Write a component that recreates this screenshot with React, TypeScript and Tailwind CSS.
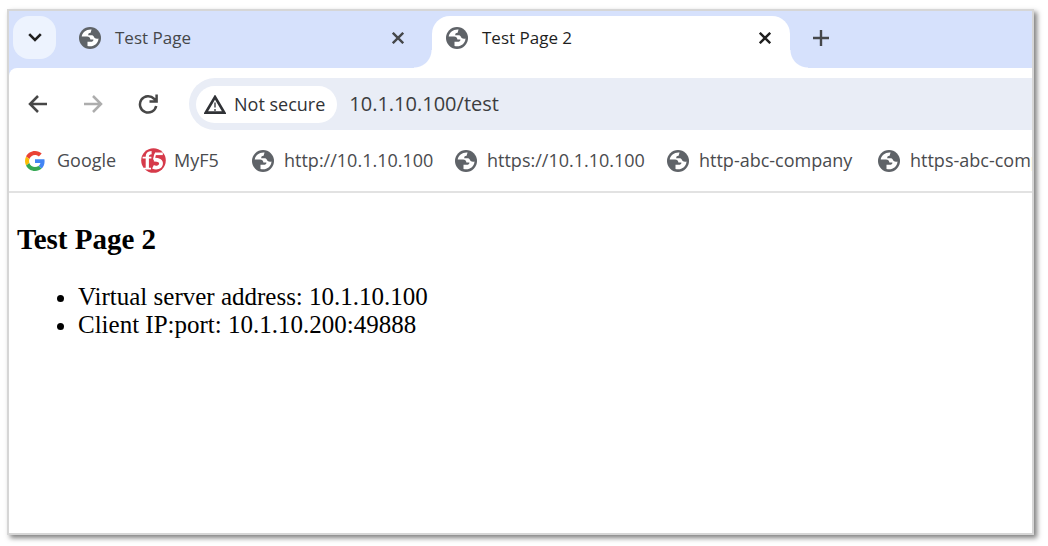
import React, { useState } from "react";

function Globe() {
  return (
    <svg viewBox="0 0 22 22" className="size-[22px] shrink-0" aria-hidden="true">
      <circle cx="11" cy="11" r="11" fill="#5f6368" />
      <path
        fill="#fff"
        d="M12.6 2.5 C7.5 2 3.4 5.2 2.7 9.5 H8 C10 9.5 11.2 10.6 11.4 12.4 H14.4 C14.4 14.2 13.4 14.8 11.6 14.8 H8.5 V19 C14 20.5 19.2 17 19.5 11.5 C17.5 12 15.6 11.6 15 10 C14.6 8.8 13.8 8.2 12.2 8.2 H9.2 C9.2 6.6 10 5.8 11.6 5.8 C12 4.5 12.2 3.5 12.6 2.5 Z"
      />
    </svg>
  );
}

function GoogleLogo() {
  return (
    <svg viewBox="0 0 48 48" className="size-5 shrink-0" aria-hidden="true">
      <path fill="#EA4335" d="M24 9.5c3.54 0 6.71 1.22 9.21 3.6l6.85-6.85C35.9 2.38 30.47 0 24 0 14.62 0 6.51 5.38 2.56 13.22l7.98 6.19C12.43 13.72 17.74 9.5 24 9.5z" />
      <path fill="#4285F4" d="M46.98 24.55c0-1.57-.15-3.09-.38-4.55H24v9.02h12.94c-.58 2.96-2.26 5.48-4.78 7.18l7.73 6c4.51-4.18 7.09-10.36 7.09-17.65z" />
      <path fill="#FBBC05" d="M10.53 28.59c-.48-1.45-.76-2.99-.76-4.59s.27-3.14.76-4.59l-7.98-6.19C.92 16.46 0 20.12 0 24c0 3.88.92 7.54 2.56 10.78l7.97-6.19z" />
      <path fill="#34A853" d="M24 48c6.48 0 11.93-2.13 15.89-5.81l-7.73-6c-2.15 1.45-4.92 2.3-8.16 2.3-6.26 0-11.57-4.22-13.47-9.91l-7.98 6.19C6.51 42.62 14.62 48 24 48z" />
    </svg>
  );
}

function F5Logo() {
  return (
    <svg viewBox="0 0 25 25" className="size-[25px] shrink-0" aria-hidden="true">
      <circle cx="12.5" cy="12.5" r="12.3" fill="#d63a4a" />
      <g fill="none" stroke="#fff">
        <path strokeWidth="3.2" d="M6.3 20.4 V8.5 Q6.3 4.8 10.6 4.6" />
        <path strokeWidth="1.8" d="M1.6 9.6 H10.4 M3 20.6 H10" />
        <path strokeWidth="2.6" d="M14 5.8 H21.8" />
        <path strokeWidth="1.8" d="M14.3 5.6 L12.9 11.6" />
        <path strokeWidth="3.8" d="M12.8 11.6 C17.6 11.4 20.4 13.2 20 16 C19.6 19.2 15.4 20.6 12 18.8" />
      </g>
    </svg>
  );
}

function CloseIcon() {
  return (
    <svg viewBox="0 0 12 12" className="size-3" fill="none" stroke="currentColor" strokeWidth="2.4" aria-hidden="true">
      <path d="M0.8 0.8 L11.2 11.2 M11.2 0.8 L0.8 11.2" />
    </svg>
  );
}

const bookmarks = [
  { label: "Google", width: "w-[116px]", icon: <GoogleLogo />, gap: "gap-3" },
  { label: "MyF5", width: "w-[111px]", icon: <F5Logo />, gap: "gap-2" },
  { label: "http://10.1.10.100", width: "w-[203px]", icon: <Globe />, gap: "gap-[10px]" },
  { label: "https://10.1.10.100", width: "w-[212px]", icon: <Globe />, gap: "gap-[10px]" },
  { label: "http-abc-company", width: "w-[211px]", icon: <Globe />, gap: "gap-[10px]" },
  { label: "https-abc-company", width: "w-[211px]", icon: <Globe />, gap: "gap-[10px]" },
];

export default function App() {
  const [url, setUrl] = useState("10.1.10.100/test");
  return (
    <div className="min-h-screen bg-white pt-[9px] pr-[14px] pb-[11px] pl-[7px] font-['Open_Sans','Noto_Sans',sans-serif]">
      <div className="min-h-[526px] overflow-hidden border-2 border-[#d6d6d6] bg-white shadow-[3px_3px_5px_0px_rgba(0,0,0,0.5)]">
        <header>
          <div className="flex h-[57px] bg-[#d6e1fc] text-[17px] text-[#45474a]">
            <button aria-label="Search tabs" className="mt-[5px] ml-1 flex size-[43px] shrink-0 items-center justify-center rounded-2xl bg-[#edf3fe] text-[#1f1f1f]">
              <svg viewBox="0 0 14 9" className="h-[9px] w-[14px]" fill="none" stroke="currentColor" strokeWidth="2.6" aria-hidden="true">
                <path d="M1.2 1.2 L7 7 L12.8 1.2" />
              </svg>
            </button>
            <div className="flex h-[54px] w-[376px] shrink-0 items-center pl-[23px]">
              <Globe />
              <span className="ml-[14px] flex-1">Test Page</span>
              <button aria-label="Close Test Page" className="mr-[28px]"><CloseIcon /></button>
            </div>
            <div className="relative mt-[5px] flex h-[52px] w-[358px] shrink-0 items-center rounded-t-[18px] bg-white pb-2 pl-[14px] text-[#1f1f1f]">
              <span className="absolute bottom-0 -left-[18px] size-[18px] bg-[radial-gradient(circle_at_0_0,transparent_17px,white_18px)]" />
              <span className="absolute -right-[18px] bottom-0 size-[18px] bg-[radial-gradient(circle_at_100%_0,transparent_17px,white_18px)]" />
              <Globe />
              <span className="ml-[14px] flex-1">Test Page 2</span>
              <button aria-label="Close Test Page 2" className="mr-[19px]"><CloseIcon /></button>
            </div>
            <button aria-label="New tab" className="ml-[23px] flex h-[54px] items-center">
              <svg viewBox="0 0 16 16" className="size-4" fill="none" stroke="currentColor" strokeWidth="2.4" aria-hidden="true">
                <path d="M8 0 V16 M0 8 H16" />
              </svg>
            </button>
          </div>
          <div className="bg-[#d6e1fc]">
            <div className="rounded-tl-lg bg-white pt-[10px]">
              <div className="flex h-[52px] items-center">
                <div className="flex w-[180px] shrink-0 items-center gap-[35px] pl-[19px] text-[#474747]">
                  <button aria-label="Back">
                    <svg viewBox="0 0 20 18" className="h-[18px] w-5" fill="none" stroke="currentColor" strokeWidth="2.5" aria-hidden="true">
                      <path d="M19 9 H2 M10 1 L2 9 L10 17" />
                    </svg>
                  </button>
                  <button aria-label="Forward" className="text-[#adadad]">
                    <svg viewBox="0 0 20 18" className="h-[18px] w-5" fill="none" stroke="currentColor" strokeWidth="2.5" aria-hidden="true">
                      <path d="M1 9 H18 M10 1 L18 9 L10 17" />
                    </svg>
                  </button>
                  <button aria-label="Reload">
                    <svg viewBox="0 0 20 20" className="size-5" fill="none" stroke="currentColor" strokeWidth="2.5" aria-hidden="true">
                      <path d="M18.2 12 A8.2 8.2 0 1 1 16.2 4.8 L18 7 M18.6 0.5 V7.4 H11.5" />
                    </svg>
                  </button>
                </div>
                <div className="flex h-full min-w-0 flex-1 items-center rounded-l-full bg-[#e9edf6] pl-[7px]">
                  <button className="flex h-[37px] shrink-0 items-center gap-2 rounded-full bg-white pr-3 pl-2 text-[18px] font-medium whitespace-nowrap text-[#303236]">
                    <svg viewBox="0 0 22 19" className="h-[19px] w-[22px]" aria-hidden="true">
                      <path d="M11 2 L20.2 17.6 H1.8 Z" fill="none" stroke="#303236" strokeWidth="2.6" />
                      <path d="M11 7.5 V12.5 M11 14 V16" stroke="#77797c" strokeWidth="2" />
                    </svg>
                    Not secure
                  </button>
                  <input aria-label="Address" value={url} onChange={(e) => setUrl(e.target.value)} className="ml-3 min-w-0 flex-1 bg-transparent text-[20px] text-[#3c3d40] outline-none" />
                </div>
              </div>
            </div>
          </div>
          <nav className="flex h-[63px] overflow-hidden border-b-2 border-[#e2e2e2] pl-4 text-[18px] text-[#4a4b4e]">
            {bookmarks.map((b) => (
              <a key={b.label} href="#" className={`flex shrink-0 items-center whitespace-nowrap ${b.width} ${b.gap}`}>
                {b.icon}
                {b.label}
              </a>
            ))}
          </nav>
        </header>
        <main className="px-2 pt-[30px] font-['Liberation_Serif',serif] text-black">
          <h3 className="text-[29px] leading-8 font-bold">Test Page 2</h3>
          <ul className="mt-7 list-disc pl-[61px] text-[25px] leading-7">
            <li>Virtual server address: 10.1.10.100</li>
            <li>Client IP:port: 10.1.10.200:49888</li>
          </ul>
        </main>
      </div>
    </div>
  );
}
